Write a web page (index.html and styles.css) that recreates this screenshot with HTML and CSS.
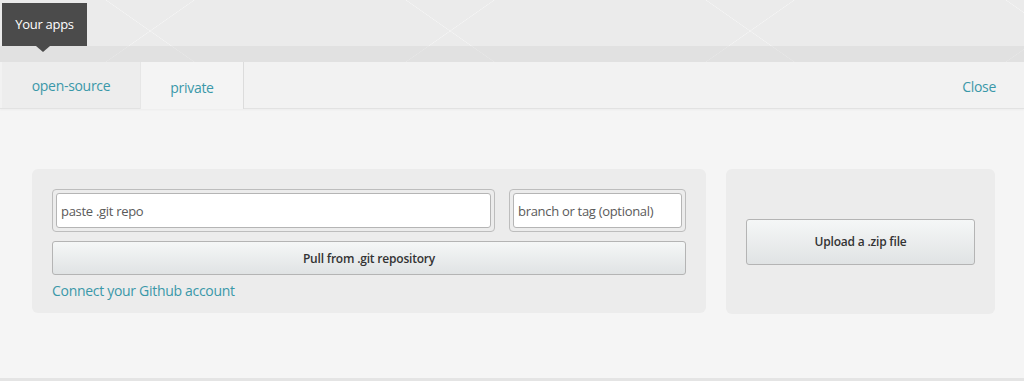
FILE: index.html
```html
<!DOCTYPE html>
<html lang="en">
<head>
  <meta charset="UTF-8" />
  <title>Your apps</title>
  <link rel="stylesheet" href="styles.css">
</head>
<body>

  <!-- Cabecera con la etiqueta oscura -->
  <div class="header">
    <div class="header-tag">Your apps</div>
    <div class="header-band"></div>
  </div>

  <!-- Pestañas -->
  <div class="tabs">
    <a class="tab" href="#">open-source</a>
    <a class="tab tab-active" href="#">private</a>
    <a class="tab-close" href="#">Close</a>
  </div>

  <div class="content">
    <div class="card card-repo">
      <div class="repo-row">
        <div class="field field-repo"><input type="text" placeholder="paste .git repo" /></div>
        <div class="field field-branch"><input type="text" placeholder="branch or tag (optional)" /></div>
      </div>
      <button class="btn btn-pull">Pull from .git repository</button>
      <a class="link-github" href="#">Connect your Github account</a>
    </div>

    <div class="card card-zip">
      <button class="btn btn-zip">Upload a .zip file</button>
    </div>
  </div>

</body>
</html>
```

FILE: styles.css
```css
body {
  margin: 0;
  background-color: #f5f5f5;
  font-family: 'Open Sans', 'Liberation Sans', sans-serif;
  color: #333;
  height: 381px;
  overflow: hidden;
}

a {
  color: #3a98a9;
  text-decoration: none;
}

/* Cabecera */
.header {
  position: relative;
  height: 62px;
  background:
    linear-gradient(35deg, transparent 49.8%, rgba(255, 255, 255, 0.5) 50%, transparent 50.3%),
    linear-gradient(145deg, transparent 49.8%, rgba(255, 255, 255, 0.5) 50%, transparent 50.3%),
    #ebebeb;
  background-size: 300px 62px;
}

.header-band {
  position: absolute;
  left: 0;
  right: 0;
  bottom: 0;
  height: 16px;
  background-color: rgba(205, 205, 205, 0.35);
}

.header-tag {
  position: absolute;
  left: 2px;
  top: 3px;
  z-index: 1;
  width: 85px;
  height: 43px;
  line-height: 43px;
  text-align: center;
  background-color: #4b4b4b;
  color: #fff;
  font-size: 13px;
  letter-spacing: -0.3px;
}

.header-tag::after {
  content: "";
  position: absolute;
  left: 34px;
  bottom: -6px;
  border-left: 7px solid transparent;
  border-right: 7px solid transparent;
  border-top: 6px solid #4b4b4b;
}

/* Pestañas */
.tabs {
  display: flex;
  height: 46px;
  background-color: #f2f2f2;
  border-bottom: 1px solid #e2e2e2;
  box-shadow: 0 1px 2px rgba(0, 0, 0, 0.04);
  padding-left: 2px;
}

.tab {
  display: flex;
  align-items: center;
  justify-content: center;
  font-size: 14px;
  letter-spacing: -0.3px;
}

.tab:first-child {
  width: 138px;
  background-color: #ededed;
  padding-top: 1px;
}

.tab-active {
  width: 102px;
  background-color: #f4f4f4;
  border-right: 1px solid #dcdcdc;
  border-left: 1px solid #e6e6e6;
  margin-bottom: -1px;
  padding-top: 4px;
}

.tab-close {
  margin-left: auto;
  margin-right: 28px;
  font-size: 14px;
  letter-spacing: -0.3px;
  display: flex;
  align-items: center;
  padding-top: 2px;
}

/* Contenido */
.content {
  display: flex;
  gap: 20px;
  padding: 60px 29px 0 32px;
  height: 209px;
  border-left: 2px solid #e4e4e4;
  border-bottom: 3px solid #e4e4e4;
  margin-left: -2px;
}

.card {
  background-color: #ececec;
  border-radius: 6px;
  padding: 20px;
  box-sizing: border-box;
  height: 144px;
}

.card-repo {
  width: 674px;
}

.card-zip {
  width: 269px;
  height: 145px;
  display: flex;
  align-items: center;
}

.repo-row {
  display: flex;
  gap: 14px;
}

.field {
  box-sizing: border-box;
  height: 43px;
  padding: 3px;
  border: 1px solid #bdbdbd;
  border-radius: 4px;
}

.field-repo {
  width: 443px;
}

.field-branch {
  width: 177px;
}

.field input {
  box-sizing: border-box;
  width: 100%;
  height: 100%;
  border: 1px solid #b5b5b5;
  border-radius: 3px;
  background-color: #fff;
  padding: 0 4px;
  font-family: inherit;
  font-size: 13px;
  letter-spacing: -0.3px;
}

.field input::placeholder {
  color: #5a5a5a;
}

.btn {
  box-sizing: border-box;
  display: block;
  border: 1px solid #b4b4b4;
  border-radius: 3px;
  background: linear-gradient(#f5f7f7, #e0e3e4);
  font-family: inherit;
  font-size: 12px;
  font-weight: 600;
  color: #333;
  letter-spacing: -0.2px;
}

.btn-pull {
  width: 634px;
  height: 34px;
  margin-top: 9px;
}

.btn-zip {
  width: 229px;
  height: 46px;
}

.link-github {
  display: block;
  margin-top: 6px;
  font-size: 14px;
  letter-spacing: -0.3px;
}
```
